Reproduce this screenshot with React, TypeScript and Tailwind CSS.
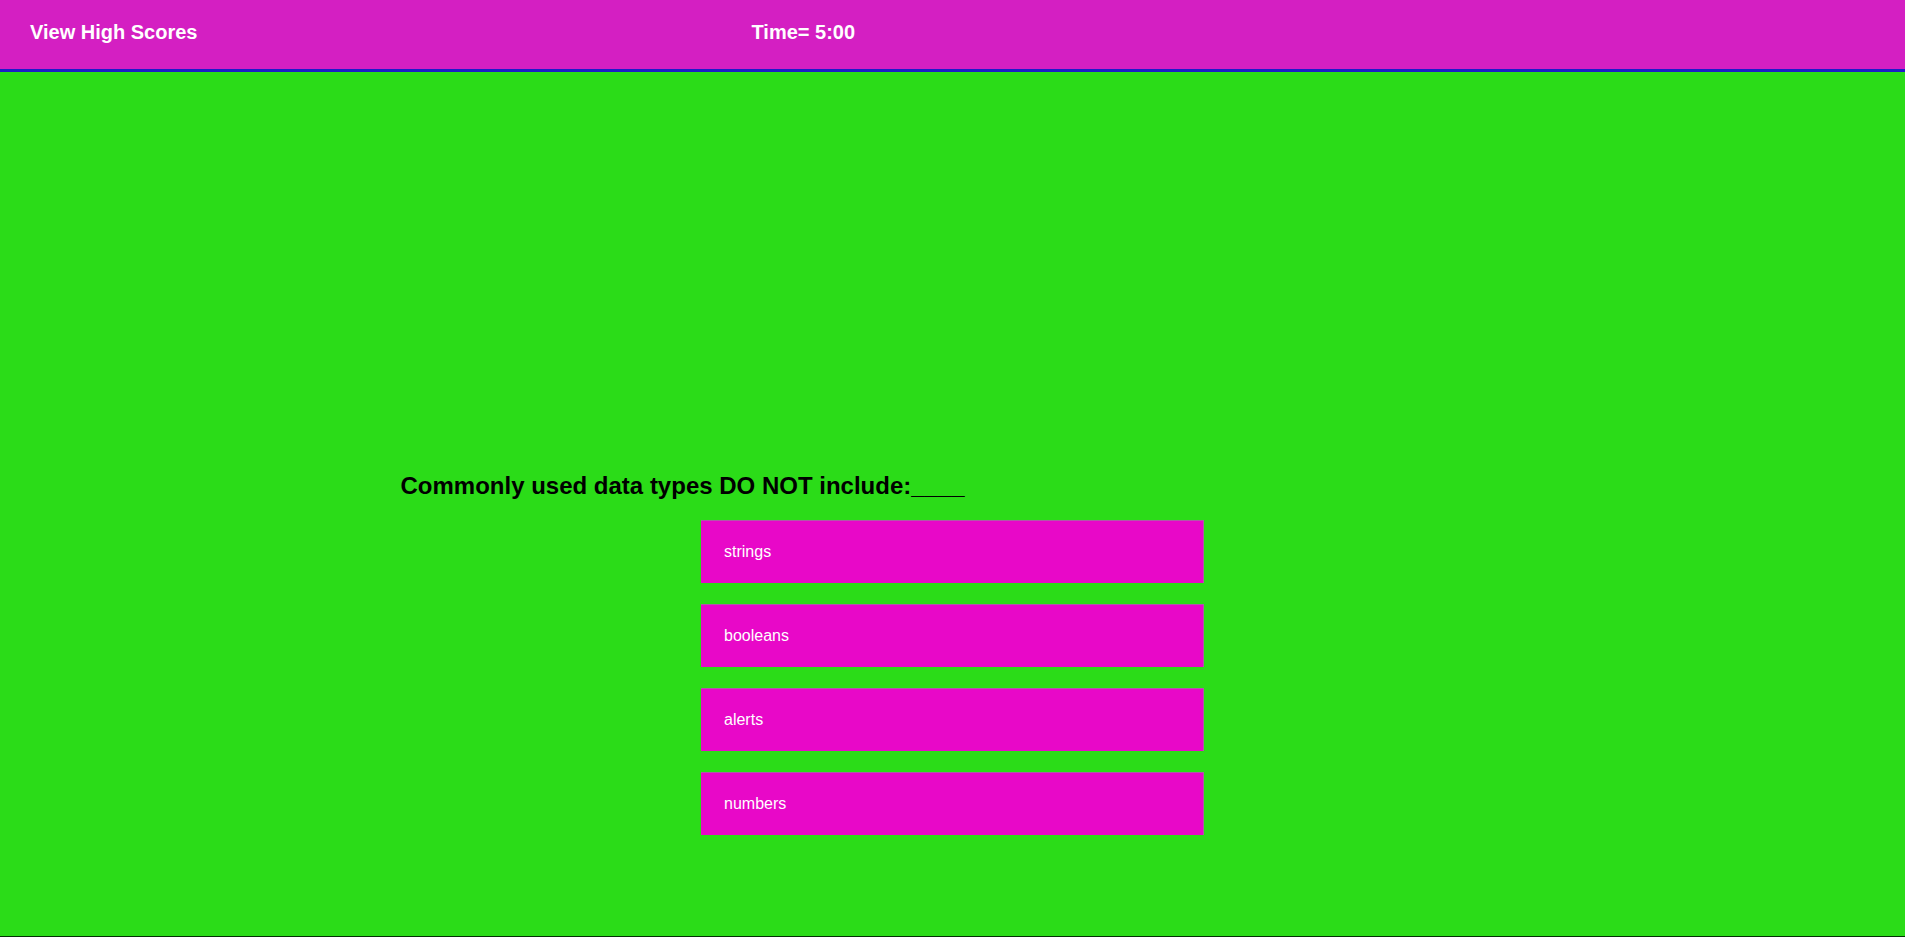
const choices = ["strings", "booleans", "alerts", "numbers"];

export default function App() {
  return (
    <div
      className="h-[937px] w-full overflow-hidden bg-[#2bdc18] border-b border-[#043004]"
      style={{ fontFamily: '"Liberation Sans", Arial, sans-serif' }}
    >
      {/* header */}
      <header className="h-[72px] bg-[#d41fc2] border-b-[3px] border-[#1c1cc8] flex items-start pt-[21px] pl-[30px] text-white font-bold text-[20px] leading-[23px]">
        <span>View High Scores</span>
        <span className="ml-[554px]">Time= 5:00</span>
      </header>

      {/* quiz */}
      <main className="flex flex-col items-center pt-[400px]">
        <h2 className="w-[1104px] text-black font-bold text-[24px] leading-[28px]">
          Commonly used data types DO NOT include:____
        </h2>
        <div className="mt-[20px] flex flex-col gap-[21px]">
          {choices.map((c) => (
            <button
              key={c}
              className="w-[503px] h-[63px] bg-[#e808c8] border-t border-r border-[#b05aa8] text-left pl-[23px] text-white text-[16px]"
            >
              {c}
            </button>
          ))}
        </div>
      </main>
    </div>
  );
}
